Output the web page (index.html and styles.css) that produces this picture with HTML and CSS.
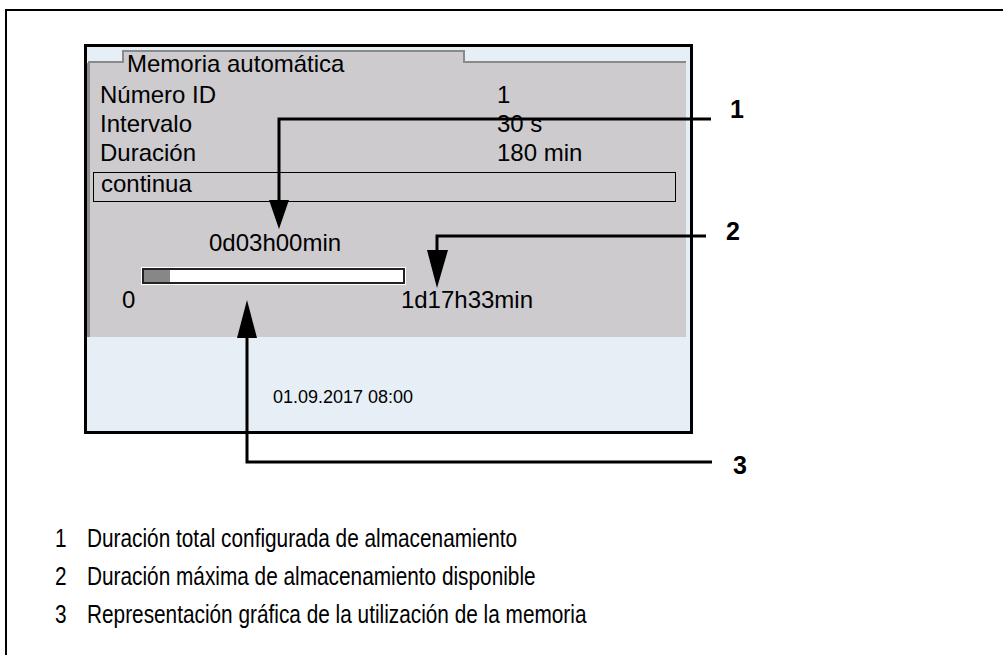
FILE: index.html
```html
<!DOCTYPE html>
<html lang="es">
<head>
    <meta charset="UTF-8">
    <meta name="viewport" content="width=device-width, initial-scale=1.0">
    <title>Memoria automática</title>
    <link rel="stylesheet" href="styles.css">
</head>
<body>
    <div class="figure">
        <div class="screen">
            <div class="tabbar">
                <span class="tab-left"></span>
                <span class="tab">Memoria automática</span>
                <span class="tab-right"></span>
            </div>
            <div class="panel">
                <div class="row"><span class="key">Número ID</span><span class="val">1</span></div>
                <div class="row"><span class="key">Intervalo</span><span class="val">30 s</span></div>
                <div class="row"><span class="key">Duración</span><span class="val">180 min</span></div>
                <div class="select">continua</div>
                <div class="elapsed">0d03h00min</div>
                <div class="bar"><div class="fill" style="width: 10%"></div></div>
                <div class="scale"><span>0</span><span>1d17h33min</span></div>
            </div>
            <div class="status">01.09.2017 08:00</div>
        </div>

        <ol class="legend">
            <li><span class="num">1</span>Duración total configurada de almacenamiento</li>
            <li><span class="num">2</span>Duración máxima de almacenamiento disponible</li>
            <li><span class="num">3</span>Representación gráfica de la utilización de la memoria</li>
        </ol>
    </div>

    <!-- leader lines with their numbers, drawn over the screen -->
    <svg class="callouts" width="1003" height="655" viewBox="0 0 1003 655">
        <g fill="none" stroke="#000" stroke-width="3">
            <polyline points="711,119 279,119 279,205"/>
            <polyline points="706,236 437,236 437,255"/>
            <polyline points="712,462 247,462 247,330"/>
        </g>
        <g fill="#000">
            <polygon points="269,200 289,200 279,229"/>
            <polygon points="427,250 448,250 437,288"/>
            <polygon points="237,338 257,338 247,300"/>
        </g>
        <g class="label">
            <text x="730" y="118">1</text>
            <text x="726" y="240">2</text>
            <text x="733" y="474">3</text>
        </g>
    </svg>
</body>
</html>
```

FILE: styles.css
```css
body {
    margin: 0;
    width: 1003px;
    height: 655px;
    overflow: hidden;
    position: relative;
    background-color: #fff;
    font-family: "Liberation Sans", Arial, sans-serif;
    color: #000;
}

.figure {
    margin: 9px 0 0 5px;
    height: 646px;
    box-sizing: border-box;
    padding-top: 33px;
    border-left: 2px solid #000;
    border-top: 2px solid #000;
}

/* device display */
.screen {
    width: 603px;
    margin-left: 77px;
    border: 3px solid #000;
    background-color: #e6eef6;
}

.tabbar {
    display: flex;
    height: 16px;
    padding-top: 3px;
    box-sizing: border-box;
}

.tab-left {
    width: 34px;
    border-bottom: 2px solid #8a8a8a;
    margin-left: 1px;
}

.tab {
    width: 336px;
    background-color: #cdcbce;
    border: 2px solid #8a8a8a;
    border-bottom: none;
    font-size: 24px;
    line-height: 24px;
    padding-left: 3px;
    white-space: nowrap;
}

.tab-right {
    flex: 1;
    border-bottom: 2px solid #8a8a8a;
    margin-right: 4px;
}

.panel {
    height: 274px;
    box-sizing: border-box;
    padding: 17px 0 0 10px;
    background-color: #cdcbce;
    border-left: 3px solid #8e8c8f;
    margin-right: 4px;
    font-size: 24px;
}

.row {
    display: flex;
    line-height: 29px;
}

.key {
    width: 397px;
}

.select {
    margin: 5px 0 0 -7px;
    width: 574px;
    height: 28px;
    border: 1px solid #000;
    padding-left: 7px;
    line-height: 22px;
}

.elapsed {
    margin: 28px 0 0 109px;
    line-height: 26px;
}

.bar {
    width: 259px;
    height: 12px;
    margin: 12px 0 0 42px;
    border: 2px solid #222;
    outline: 1px solid #fff;
    background-color: #fff;
}

.fill {
    height: 100%;
    background-color: #878787;
}

.scale {
    display: flex;
    justify-content: space-between;
    width: 411px;
    margin: 3px 0 0 22px;
    line-height: 26px;
}

.status {
    height: 94px;
    box-sizing: border-box;
    padding: 50px 0 0 186px;
    font-size: 18px;
}

/* legend below the figure */
.legend {
    list-style: none;
    margin: 85px 0 0 48px;
    padding: 0;
    font-size: 26px;
}

.legend li {
    line-height: 38px;
    white-space: nowrap;
    transform: scaleX(0.8);
    transform-origin: left center;
}

.legend .num {
    display: inline-block;
    width: 40px;
}

.callouts {
    position: absolute;
    top: 0;
    left: 0;
}

.label text {
    font-family: "Liberation Sans", Arial, sans-serif;
    font-weight: bold;
    font-size: 25px;
}
```
